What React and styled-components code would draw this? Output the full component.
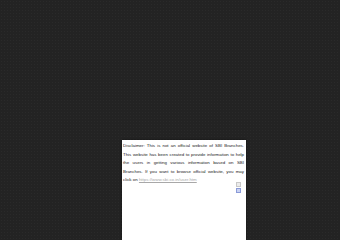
import React from "react";
import styled, { createGlobalStyle } from "styled-components";

const Global = createGlobalStyle`
  html, body {
    margin: 0;
    padding: 0;
    background: #232323;
  }
`;

const Page = styled.div`
  height: 100vh;
  overflow: hidden;
  display: flex;
  align-items: stretch;
  padding: 140px 0 0 122px;
  box-sizing: border-box;
  background-color: #232323;
  background-image: radial-gradient(#2a2a2a 0.6px, transparent 0.7px);
  background-size: 3px 3px;
`;

const Notice = styled.div`
  position: relative;
  width: 124px;
  background: #fff;
  box-shadow: 0 0 2px rgba(0, 0, 0, 0.6);
  padding: 2px 2px 0 1px;
  box-sizing: border-box;
`;

const Text = styled.p`
  margin: 0;
  font-family: "Liberation Sans", Arial, sans-serif;
  font-size: 4.4px;
  line-height: 8.6px;
  color: #222;
  text-align: justify;
`;

const Link = styled.a`
  color: #a8a8a8;
  text-decoration: underline;
`;

const ScrollButton = styled.span`
  position: absolute;
  right: 5px;
  top: ${(p) => p.top}px;
  width: 3px;
  height: 3px;
  border: 0.5px solid ${(p) => (p.active ? "#8a9ad8" : "#c8c8c8")};
  background: ${(p) => (p.active ? "#c9d2f2" : "#ececec")};
`;

export default function App() {
  return (
    <>
      <Global />
      <Page>
        <Notice>
          <Text>
            Disclaimer: This is not an official website of SBI Branches. This
            website has been created to provide information to help the users
            in getting various information based on SBI Branches. If you want
            to browse official website, you may click{"\u00a0"}on{" "}
            <Link href="#">https://www.sbi.co.in/user.htm</Link>
          </Text>
          <ScrollButton top={42} />
          <ScrollButton top={48} active />
        </Notice>
      </Page>
    </>
  );
}
